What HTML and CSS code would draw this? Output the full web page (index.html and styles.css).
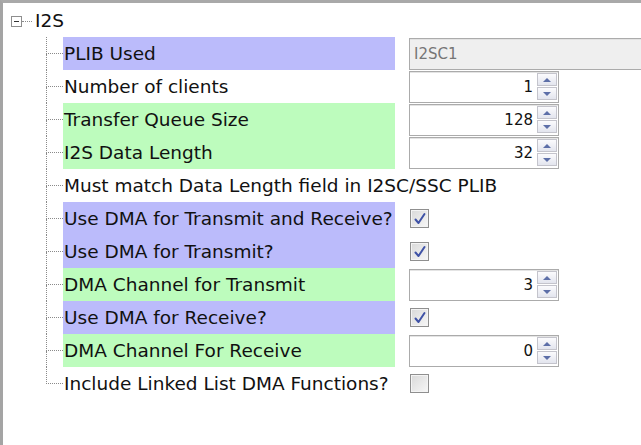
FILE: index.html
```html
<!DOCTYPE html>
<html>
<head>
<meta charset="utf-8">
<link rel="stylesheet" href="styles.css">
</head>
<body>
<div class="panel">
  <div class="root">
    <span class="toggle"><span class="minus"></span></span>
    <span class="root-dots"></span>
    <span class="root-label">I2S</span>
  </div>
  <ul class="children">
    <li class="row">
      <span class="conn"><span class="conn-top"></span><span class="conn-bot"></span></span>
      <span class="label purple">PLIB Used</span>
      <span class="ctl"><span class="text-field">I2SC1</span></span>
    </li>
    <li class="row">
      <span class="conn"><span class="conn-top"></span><span class="conn-bot"></span></span>
      <span class="label">Number of clients</span>
      <span class="ctl"><span class="spinner"><span class="value">1</span><span class="spin"><span class="up"></span><span class="down"></span></span></span></span>
    </li>
    <li class="row">
      <span class="conn"><span class="conn-top"></span><span class="conn-bot"></span></span>
      <span class="label green">Transfer Queue Size</span>
      <span class="ctl"><span class="spinner"><span class="value">128</span><span class="spin"><span class="up"></span><span class="down"></span></span></span></span>
    </li>
    <li class="row">
      <span class="conn"><span class="conn-top"></span><span class="conn-bot"></span></span>
      <span class="label green">I2S Data Length</span>
      <span class="ctl"><span class="spinner"><span class="value">32</span><span class="spin"><span class="up"></span><span class="down"></span></span></span></span>
    </li>
    <li class="row">
      <span class="conn"><span class="conn-top"></span><span class="conn-bot"></span></span>
      <span class="label wide">Must match Data Length field in I2SC/SSC PLIB</span>
    </li>
    <li class="row">
      <span class="conn"><span class="conn-top"></span><span class="conn-bot"></span></span>
      <span class="label purple">Use DMA for Transmit and Receive?</span>
      <span class="ctl"><span class="checkbox"><svg width="16" height="16" viewBox="0 0 16 16"><path d="M3.5 8.5 L6.5 12 L12.5 3" fill="none" stroke="#3f52a6" stroke-width="2" stroke-linecap="round" stroke-linejoin="round"/></svg></span></span>
    </li>
    <li class="row">
      <span class="conn"><span class="conn-top"></span><span class="conn-bot"></span></span>
      <span class="label purple">Use DMA for Transmit?</span>
      <span class="ctl"><span class="checkbox"><svg width="16" height="16" viewBox="0 0 16 16"><path d="M3.5 8.5 L6.5 12 L12.5 3" fill="none" stroke="#3f52a6" stroke-width="2" stroke-linecap="round" stroke-linejoin="round"/></svg></span></span>
    </li>
    <li class="row">
      <span class="conn"><span class="conn-top"></span><span class="conn-bot"></span></span>
      <span class="label green">DMA Channel for Transmit</span>
      <span class="ctl"><span class="spinner"><span class="value">3</span><span class="spin"><span class="up"></span><span class="down"></span></span></span></span>
    </li>
    <li class="row">
      <span class="conn"><span class="conn-top"></span><span class="conn-bot"></span></span>
      <span class="label purple">Use DMA for Receive?</span>
      <span class="ctl"><span class="checkbox"><svg width="16" height="16" viewBox="0 0 16 16"><path d="M3.5 8.5 L6.5 12 L12.5 3" fill="none" stroke="#3f52a6" stroke-width="2" stroke-linecap="round" stroke-linejoin="round"/></svg></span></span>
    </li>
    <li class="row">
      <span class="conn"><span class="conn-top"></span><span class="conn-bot"></span></span>
      <span class="label green">DMA Channel For Receive</span>
      <span class="ctl"><span class="spinner"><span class="value">0</span><span class="spin"><span class="up"></span><span class="down"></span></span></span></span>
    </li>
    <li class="row last">
      <span class="conn"><span class="conn-top"></span><span class="conn-bot"></span></span>
      <span class="label">Include Linked List DMA Functions?</span>
      <span class="ctl"><span class="checkbox"></span></span>
    </li>
  </ul>
</div>
</body>
</html>
```
FILE: styles.css
```css
* { box-sizing: border-box; }
html, body { margin: 0; padding: 0; background: #fff; }
body {
  width: 641px;
  height: 445px;
  overflow: hidden;
  font-family: "DejaVu Sans", Verdana, sans-serif;
  font-size: 18.5px;
  color: #111;
}
.panel {
  height: 445px;
  border-top: 3px solid #a9a9a9;
  border-left: 3px solid #a4a4a4;
  padding-top: 2px;
  overflow: hidden;
}
.root {
  height: 32px;
  display: flex;
  align-items: center;
  padding-left: 8px;
}
.toggle {
  width: 11px;
  height: 11px;
  border: 1px solid #8e8e8e;
  background: #fff;
  display: flex;
  align-items: center;
  justify-content: center;
}
.minus {
  width: 5px;
  height: 1px;
  background: #333;
}
.root-dots {
  width: 10px;
  border-top: 1px dotted #8a8a8a;
  margin-right: 3px;
}
.root-label { line-height: 1; }
.children {
  list-style: none;
  margin: 0;
  padding: 0 0 0 43px;
}
.row {
  height: 33px;
  display: flex;
  align-items: stretch;
}
.conn {
  width: 17px;
  flex: none;
  display: flex;
  flex-direction: column;
}
.conn-top {
  height: 17px;
  border-left: 1px dotted #8a8a8a;
  border-bottom: 1px dotted #8a8a8a;
}
.conn-bot {
  flex: 1;
  border-left: 1px dotted #8a8a8a;
}
.last .conn-bot { border-left: none; }
.label {
  width: 332px;
  flex: none;
  display: flex;
  align-items: center;
  padding-left: 1px;
  white-space: nowrap;
}
.label.wide { width: auto; }
.purple { background: #bbbbfb; }
.green { background: #bdfcbd; }
.ctl {
  flex: none;
  margin-left: 14px;
  display: flex;
  align-items: center;
}
.text-field {
  width: 260px;
  height: 32px;
  border: 1px solid #ababab;
  box-shadow: inset 0 1px 0 #e2e2e2;
  background: #efefef;
  display: flex;
  align-items: center;
  padding-left: 4px;
  font-size: 15px;
  color: #767676;
}
.spinner {
  width: 150px;
  height: 32px;
  border: 1px solid #ababab;
  box-shadow: inset 0 1px 0 #e4e4e4;
  background: #fff;
  display: flex;
  align-items: center;
  padding: 2px 1px 2px 4px;
}
.value {
  flex: 1;
  text-align: right;
  padding-right: 4px;
  font-size: 15px;
  color: #111;
}
.spin {
  width: 20px;
  height: 27px;
  display: flex;
  flex-direction: column;
  gap: 1px;
}
.up, .down {
  flex: 1;
  border: 1px solid #c4c4cc;
  background: linear-gradient(#fbfbfd, #e3e5ee);
  display: flex;
  align-items: center;
  justify-content: center;
}
.up::before {
  content: "";
  border-left: 4px solid transparent;
  border-right: 4px solid transparent;
  border-bottom: 4px solid #5d6fa8;
}
.down::before {
  content: "";
  border-left: 4px solid transparent;
  border-right: 4px solid transparent;
  border-top: 4px solid #5d6fa8;
}
.checkbox {
  width: 19px;
  height: 19px;
  margin-left: 1px;
  border: 1px solid #8f8f8f;
  box-shadow: inset 0 0 0 1px #f4f4f4;
  background: linear-gradient(135deg, #d9d9d9, #f7f7f7);
  display: flex;
  align-items: center;
  justify-content: center;
}
```
